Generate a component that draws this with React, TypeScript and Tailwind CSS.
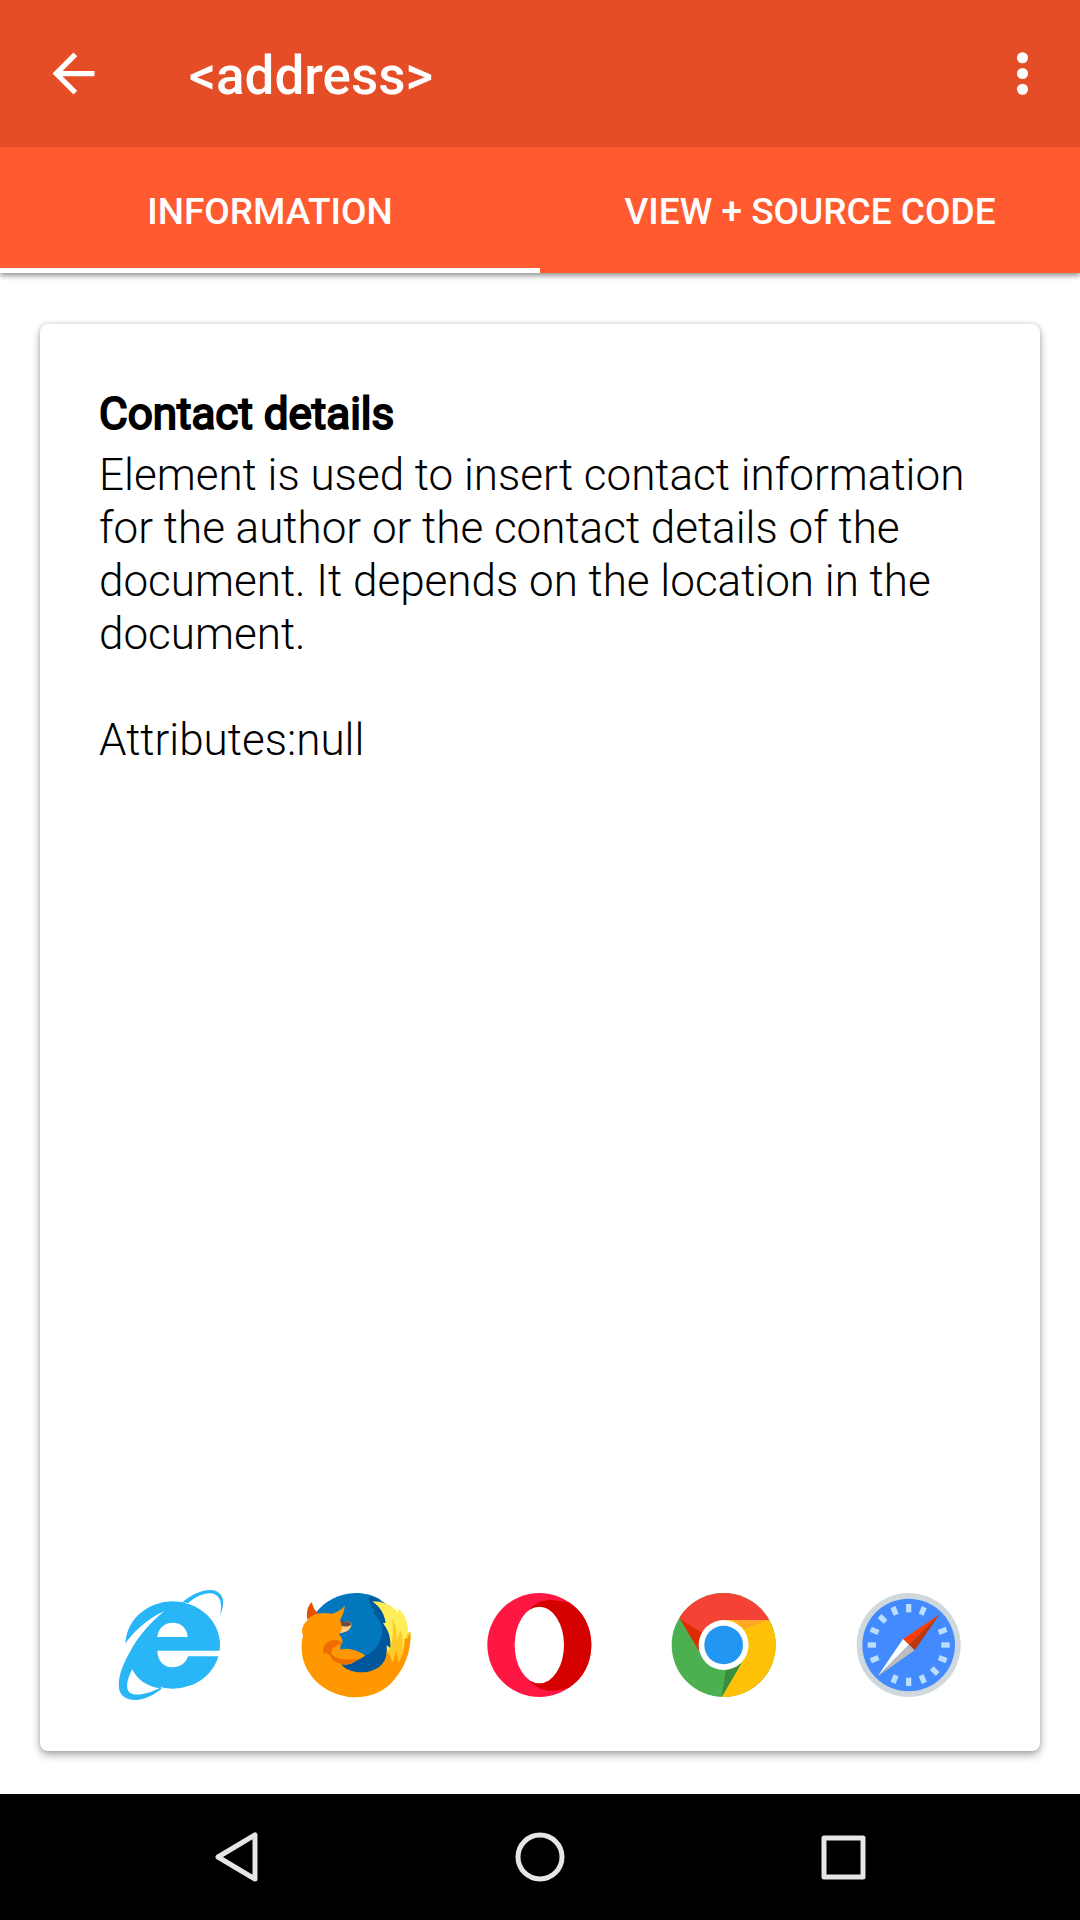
import React from "react";

const ExplorerIcon = () => (
  <svg viewBox="-5 6 378 378" className="size-[126px]" aria-label="Internet Explorer" role="img">
    <ellipse cx="189" cy="195" rx="142" ry="131" fill="#29b6f6" />
    <path d="M30 205 L47 190 C80 145 122 112 165 93 C120 128 82 175 62 215 L30 285Z" fill="#fff" />
    <path
      d="M165 93 C120 130 82 178 61 215 C35 262 25 292 28 325 C32 353 58 363 88 359 C112 355 136 342 156 326 L110 260Z"
      fill="#29b6f6"
    />
    <path d="M68 268 C54 293 48 318 56 333 C68 352 112 344 149 325 C110 318 81 298 68 268Z" fill="#fff" />
    <path d="M143 171 C145 145 164 128 189 128 C214 128 233 145 234 171Z" fill="#fff" />
    <path d="M143 212 H340 V229 H235 C228 250 211 262 189 262 C162 262 144 243 143 212Z" fill="#fff" />
    <path
      d="M218 67 C245 44 275 30 302 30 C337 30 352 62 331 106 C340 68 331 42 302 40 C282 39 258 50 236 69Z"
      fill="#29b6f6"
    />
  </svg>
);

const FirefoxIcon = () => (
  <svg viewBox="8 6 378 378" className="size-[126px]" aria-label="Firefox" role="img">
    <path d="M76 98 C105 62 147 40 196 39 C225 39 247 46 268 57 L318 150 L290 270 L190 285 L100 220Z" fill="#0277bd" />
    <path
      d="M238 50 C256 50 292 70 316 98 L318 200 L296 275 C260 300 175 290 152 252 C170 256 188 250 205 236 C250 222 277 190 276 145 C273 130 262 112 248 96 L254 92 C242 80 234 66 238 50Z"
      fill="#01579b"
    />
    <path
      d="M246 64 C275 64 302 73 324 98 L322 84 C343 101 354 127 353 158 L360 156 C363 214 343 268 303 300 L276 260 L290 236 L289 196 L300 204 C302 178 297 154 278 130 L286 128 C281 98 268 81 246 64Z"
      fill="#ffee58"
    />
    <path
      d="M305 118 C318 138 322 158 318 184 L330 150 C338 170 339 186 336 206 L353 158 L360 156 C363 214 343 268 303 300 L276 260 L290 236 L289 215 L300 204 C308 178 310 150 305 118Z"
      fill="#ffca28"
    />
    <path d="M51 118 C47 96 52 79 64 66 C69 82 74 94 84 101Z" fill="#e65100" />
    <path d="M148 125 C164 122 176 124 184 130 C183 150 169 158 146 160Z" fill="#ffcc80" />
    <path d="M148 124 C164 121 177 124 185 132 C173 143 162 139 148 138Z" fill="#6d4c41" />
    <path
      d="M48 124 C62 105 84 95 124 101 C137 98 152 90 164 77 C161 94 157 107 149 120 L154 137 C154 150 151 157 146 163 C152 169 157 179 157 187 C151 193 148 199 151 209 C172 201 199 210 224 225 C220 234 207 236 195 244 C184 252 172 257 152 252 C169 278 227 287 263 263 C281 251 289 232 289 215 C303 229 306 239 304 252 C312 238 315 225 315 211 C322 228 324 239 323 250 C341 224 345 197 342 177 C351 179 356 169 360 157 C364 215 339 276 296 316 C243 362 160 364 98 321 C45 283 24 226 38 166 C32 151 36 137 48 124Z"
      fill="#ff9800"
    />
    <path
      d="M99 221 C96 196 108 185 127 181 C142 178 151 182 156 190 C142 197 123 199 123 221 C137 238 166 242 206 236 C189 246 173 257 151 251 C132 247 123 240 119 226 C112 220 105 218 99 221Z"
      fill="#ef6c00"
    />
  </svg>
);

const OperaIcon = () => (
  <svg viewBox="6 6 378 378" className="size-[126px]" aria-label="Opera" role="img">
    <circle cx="193" cy="195" r="156" fill="#ff1744" />
    <path
      d="M160 92 C180 68 205 58 232 60 C246 61 262 65 282 67 C325 94 349 140 349 195 C349 250 325 296 280 324 C262 328 246 332 228 332 C200 332 178 320 160 298Z"
      fill="#d50000"
    />
    <ellipse cx="193" cy="195" rx="74" ry="115" fill="#fff" />
  </svg>
);

const ChromeIcon = () => (
  <svg viewBox="4 6 378 378" className="size-[126px]" aria-label="Chrome" role="img">
    <clipPath id="chrome-disc">
      <circle cx="192" cy="195" r="156" />
    </clipPath>
    <g clipPath="url(#chrome-disc)">
      <rect x="30" y="30" width="330" height="330" fill="#4caf50" />
      <path d="M192 195 L254 235 L180 361 H360 V120 H192Z" fill="#ffc107" />
      <path d="M50 98 L62 118 L118 212 L192 195 V120 H360 V30 H50Z" fill="#f44336" />
      <path d="M62 118 L118 212 L130 160Z" fill="#dd2c00" />
      <path d="M186 351 L245 250 L200 265Z" fill="#388e3c" />
      <path d="M220 120 H326 L255 146Z" fill="#ffa726" />
    </g>
    <circle cx="192" cy="195" r="75" fill="#fff" />
    <circle cx="192" cy="195" r="58" fill="#2196f3" />
  </svg>
);

const tickAngles = [0, 22.5, 67.5, 90, 112.5, 135, 157.5, 180, 202.5, 247.5, 270, 292.5, 315, 337.5];

const SafariIcon = () => (
  <svg viewBox="2 6 378 378" className="size-[126px]" aria-label="Safari" role="img">
    <circle cx="190" cy="195" r="156" fill="#cfd8dc" />
    <circle cx="190" cy="195" r="139" fill="#448aff" />
    {tickAngles.map((angle) => (
      <rect key={angle} x="182" y="72" width="16" height="25" fill="#bbdefb" transform={`rotate(${angle} 190 195)`} />
    ))}
    <path d="M283 103 L173 177 L191 194Z" fill="#ff3d00" />
    <path d="M283 103 L191 194 L208 211Z" fill="#bf360c" />
    <path d="M97 289 L173 177 L191 194Z" fill="#fff" />
    <path d="M97 289 L191 194 L208 211Z" fill="#bdbdbd" />
  </svg>
);

const browsers = [ExplorerIcon, FirefoxIcon, OperaIcon, ChromeIcon, SafariIcon];

export default function App() {
  return (
    <div className="flex min-h-screen flex-col bg-white font-['Roboto',sans-serif] text-black">
      <header className="relative z-10 shadow-[0_3px_5px_rgba(0,0,0,0.4)]">
        <div className="flex h-[147px] items-center bg-[#e54d26] pr-[26px] pl-[42px] text-white">
          <button type="button" aria-label="Back">
            <svg viewBox="0 0 24 24" className="size-[63px]" fill="currentColor">
              <path d="M20 11H7.83l5.59-5.59L12 4l-8 8 8 8 1.41-1.41L7.83 13H20v-2z" />
            </svg>
          </button>
          <h1 className="ml-[84px] flex-1 pt-1 text-[53px] leading-[60px] font-medium">&lt;address&gt;</h1>
          <button type="button" aria-label="More options">
            <svg viewBox="0 0 24 24" className="size-[63px]" fill="currentColor">
              <circle cx="12" cy="6" r="2.1" />
              <circle cx="12" cy="12" r="2.1" />
              <circle cx="12" cy="18" r="2.1" />
            </svg>
          </button>
        </div>
        <div role="tablist" className="grid h-[126px] grid-cols-2 bg-[#ff5a30] text-[37px] leading-[44px] font-medium text-white">
          <button type="button" role="tab" aria-selected="true" className="border-b-5 border-white pt-2">
            INFORMATION
          </button>
          <button type="button" role="tab" aria-selected="false" className="border-b-5 border-transparent pt-2">
            VIEW + SOURCE CODE
          </button>
        </div>
      </header>

      <main className="flex flex-1 flex-col px-10 pt-[51px] pb-[43px]">
        <article className="flex flex-1 flex-col rounded-lg bg-white px-[39px] pt-16 pb-[43px] shadow-[0_4px_8px_rgba(0,0,0,0.32),0_0_4px_rgba(0,0,0,0.15)]">
          <div className="px-5 text-[44px] leading-[53px]">
            <h2 className="mb-2 font-normal [-webkit-text-stroke:2px_black]">Contact details</h2>
            <p className="font-light">
              Element is used to insert contact information for the author or the contact details of the document. It
              depends on the location in the document.
            </p>
            <p className="mt-[53px] font-light">Attributes:null</p>
          </div>
          <div className="mt-auto grid grid-cols-5 justify-items-center">
            {browsers.map((Icon, i) => (
              <Icon key={i} />
            ))}
          </div>
        </article>
      </main>

      <nav className="grid h-[126px] grid-cols-3 place-items-center bg-black px-[84px] text-[#e6e6e6]">
        <button type="button" aria-label="Back">
          <svg viewBox="0 0 60 60" className="size-[60px]" fill="none" stroke="currentColor" strokeWidth="5" strokeLinejoin="round">
            <path d="M12 30 L49 8 V52Z" />
          </svg>
        </button>
        <button type="button" aria-label="Home">
          <svg viewBox="0 0 60 60" className="size-[60px]" fill="none" stroke="currentColor" strokeWidth="5">
            <circle cx="30" cy="30" r="22" />
          </svg>
        </button>
        <button type="button" aria-label="Recent apps">
          <svg viewBox="0 0 60 60" className="size-[60px]" fill="none" stroke="currentColor" strokeWidth="5" strokeLinejoin="round">
            <rect x="10" y="11" width="39" height="39" />
          </svg>
        </button>
      </nav>
    </div>
  );
}
